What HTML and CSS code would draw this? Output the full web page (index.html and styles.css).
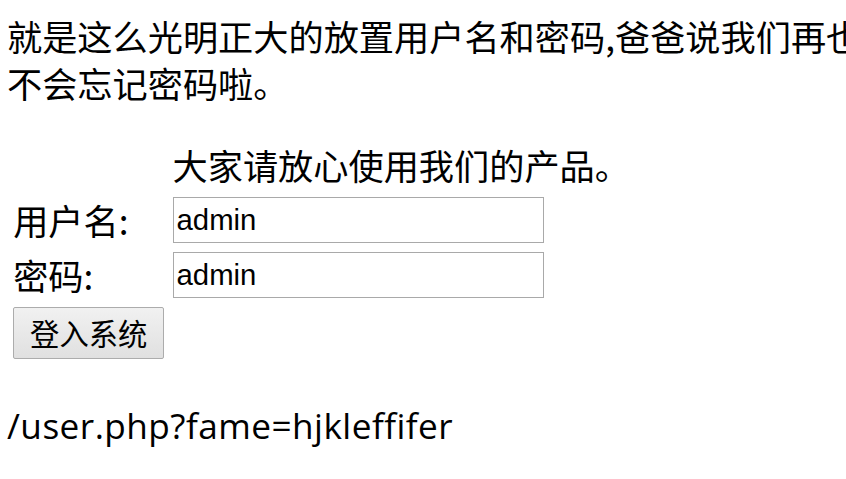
FILE: index.html
```html
<!DOCTYPE html>
<html lang="zh-CN">
<head>
<meta charset="utf-8">
<title>登录</title>
<link rel="stylesheet" href="styles.css">
</head>
<body>
<p class="intro">就是这么光明正大的放置用户名和密码,爸爸说我们再也<br>不会忘记密码啦。</p>
<form class="login-form">
<table class="login">
<tr><td></td><td class="notice">大家请放心使用我们的产品。</td></tr>
<tr><td class="label">用户名:</td><td><input class="field" type="text" value="admin"></td></tr>
<tr><td class="label">密码:</td><td><input class="field" type="text" value="admin"></td></tr>
<tr><td><button class="submit" type="button">登入系统</button></td><td></td></tr>
</table>
</form>
<p class="hint">/user.php?fame=hjkleffifer</p>
</body>
</html>
```
FILE: styles.css
```css
html, body {
  overflow: hidden;
}
body {
  margin: 0;
  padding: 13px 0 0 7px;
  font-family: "Noto Sans CJK SC", sans-serif;
  font-size: 35.2px;
  line-height: 46.5px;
  color: #000;
  background: #fff;
}
.intro {
  margin: 0;
  white-space: nowrap;
}
.login-form {
  margin: 30px 0 0 0;
}
.login {
  border-spacing: 4.4px;
  border-collapse: separate;
}
.login td {
  padding: 2.2px;
  vertical-align: middle;
  white-space: nowrap;
}
.field {
  display: block;
  box-sizing: border-box;
  width: 371px;
  height: 46px;
  margin: 0;
  padding: 0 3px;
  border: 1px solid #a9a9a9;
  font-family: "Liberation Sans", Arial, sans-serif;
  font-size: 29.3px;
  color: #000;
  background: #fff;
}
.submit {
  display: block;
  box-sizing: border-box;
  width: 151px;
  height: 52px;
  margin: 0;
  padding: 0;
  border: 1px solid #acacac;
  border-radius: 2px;
  background: linear-gradient(#f1f1f1, #e0e0e0);
  font-family: "Noto Sans CJK SC", sans-serif;
  font-size: 29.3px;
  line-height: 1;
  color: #000;
}
.hint {
  margin: 37px 0 0 0;
  font-family: "Open Sans", sans-serif;
  font-size: 35.2px;
  letter-spacing: 0.45px;
}
```
